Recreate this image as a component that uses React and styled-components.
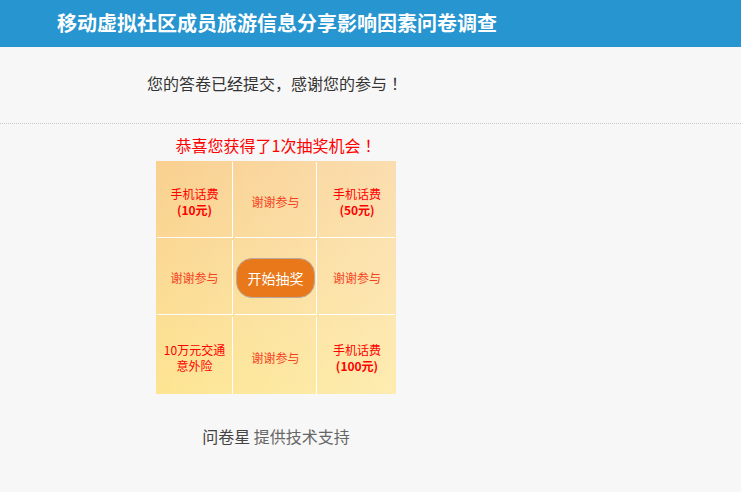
import React from 'react';
import styled, { createGlobalStyle } from 'styled-components';

const GlobalStyle = createGlobalStyle`
  html, body {
    margin: 0;
    padding: 0;
    background: #f7f7f7;
    font-family: "Noto Sans CJK SC", "Noto Sans", sans-serif;
  }
`;

const Page = styled.div`
  width: 741px;
  min-height: 492px;
  background: #f7f7f7;
`;

const Header = styled.div`
  height: 47px;
  background: #2795d0;
  padding-left: 57px;
  display: flex;
  align-items: center;
`;

const Title = styled.h1`
  margin: 0;
  color: #fff;
  font-size: 20px;
  font-weight: bold;
  line-height: 1;
  padding-bottom: 2px;
`;

const Notice = styled.div`
  padding: 24px 0 28px 147px;
  font-size: 16px;
  line-height: 24px;
  color: #333;
`;

// SC fonts push the full-width "！" to the left of its box; the reference centres it
const Bang = styled.span`
  display: inline-block;
  width: 16px;
  text-align: center;
  font-family: "Noto Sans CJK JP", sans-serif;
`;

const Divider = styled.div`
  border-top: 1px dotted #c8c8c8;
`;

const Lottery = styled.div`
  width: 240px;
  margin-left: 156px;
  padding-top: 9px;
`;

const Congrats = styled.div`
  text-align: center;
  color: #f00;
  font-size: 16px;
  line-height: 24px;
  margin-bottom: 4px;
`;

const Board = styled.div`
  display: grid;
  grid-template-columns: 76px 82px 76px;
  grid-template-rows: 76px 75px 77px;
  gap: 2px;
  padding: 1px 1px 0 1px;
  background:
    linear-gradient(90deg, rgba(255, 255, 255, 0) 0%, rgba(255, 255, 255, 0.28) 100%),
    linear-gradient(180deg, #f9d090 0%, #fbdb94 50%, #fde592 100%);
`;

const Cell = styled.div`
  display: flex;
  flex-direction: column;
  align-items: center;
  justify-content: center;
  text-align: center;
  font-size: 12px;
  line-height: 16px;
  color: ${p => (p.thanks ? '#f5421e' : '#f00')};
  border-right: ${p => (p.lastCol ? 'none' : '1px solid #fff')};
  border-bottom: ${p => (p.lastRow ? 'none' : '1px solid #fff')};
  padding-top: ${p => (p.middleRow ? '1px' : '5px')};
  box-sizing: border-box;
`;

const Amount = styled.b`
  font-weight: bold;
`;

const StartButton = styled.button`
  width: 79px;
  height: 40px;
  border-radius: 16px;
  border: 1px solid #b9a9a2;
  background: #e8781a;
  color: #fff;
  font-family: inherit;
  font-size: 14px;
  padding: 0;
  cursor: pointer;
`;

const Footer = styled.div`
  text-align: center;
  width: 240px;
  margin-left: 156px;
  margin-top: 30px;
  font-size: 16px;
  line-height: 24px;
  color: #666;
`;

const Brand = styled.span`
  color: #444;
`;

const prizes = [
  { lines: ['手机话费', '(10元)'] },
  { thanks: true },
  { lines: ['手机话费', '(50元)'] },
  { thanks: true },
  { button: true },
  { thanks: true },
  { lines: ['10万元交通', '意外险'], plain: true },
  { thanks: true },
  { lines: ['手机话费', '(100元)'] }
];

const App = () => (
  <Page>
    <GlobalStyle />
    <Header>
      <Title>移动虚拟社区成员旅游信息分享影响因素问卷调查</Title>
    </Header>
    <Notice>
      您的答卷已经提交，感谢您的参与<Bang>！</Bang>
    </Notice>
    <Divider />
    <Lottery>
      <Congrats>
        恭喜您获得了1次抽奖机会<Bang>！</Bang>
      </Congrats>
      <Board>
        {prizes.map((p, i) => (
          <Cell
            key={i}
            thanks={p.thanks}
            lastCol={i % 3 === 2}
            lastRow={i >= 6}
            middleRow={i >= 3 && i < 6}
          >
            {p.button ? (
              <StartButton>开始抽奖</StartButton>
            ) : p.thanks ? (
              '谢谢参与'
            ) : (
              <>
                <span>{p.lines[0]}</span>
                {p.plain ? (
                  <span>{p.lines[1]}</span>
                ) : (
                  <Amount>{p.lines[1]}</Amount>
                )}
              </>
            )}
          </Cell>
        ))}
      </Board>
    </Lottery>
    <Footer>
      <Brand>问卷星</Brand> 提供技术支持
    </Footer>
  </Page>
);

export default App;
